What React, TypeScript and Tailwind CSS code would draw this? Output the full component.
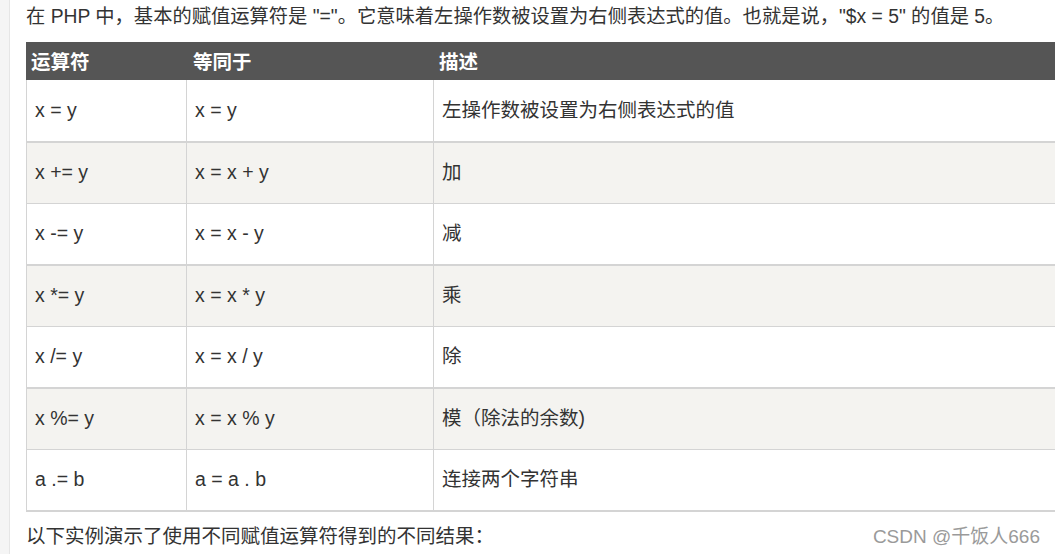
import React from "react";

const rows: [string, string, string][] = [
  ["x = y", "x = y", "左操作数被设置为右侧表达式的值"],
  ["x += y", "x = x + y", "加"],
  ["x -= y", "x = x - y", "减"],
  ["x *= y", "x = x * y", "乘"],
  ["x /= y", "x = x / y", "除"],
  ["x %= y", "x = x % y", "模（除法的余数)"],
  ["a .= b", "a = a . b", "连接两个字符串"],
];

export default function App() {
  return (
    <div
      className="flex w-[1055px] h-[554px] overflow-hidden bg-white text-[#333]"
      style={{ fontFamily: '"Liberation Sans", "Noto Sans CJK SC", sans-serif' }}
    >
      <div className="w-[10px] shrink-0 bg-[#f5f5f5] border-r border-[#e6e6e6]" />
      <div className="flex flex-col pl-[16px] min-w-0 flex-1">
        <p className="h-[42px] flex items-center text-[19.3px] whitespace-nowrap pb-[8px]">
          在 PHP 中，基本的赋值运算符是 "="。它意味着左操作数被设置为右侧表达式的值。也就是说，"$x = 5" 的值是 5。
        </p>
        <div className="w-[1040px] flex flex-col">
          <div className="h-[38px] bg-[#555] text-white font-bold text-[19.5px] flex">
            <div className="w-[161px] pl-[5px] pt-[6px]">运算符</div>
            <div className="w-[247px] pl-[6px] pt-[6px]">等同于</div>
            <div className="flex-1 pl-[5px] pt-[6px]">描述</div>
          </div>
          {rows.map((r, i) => {
            const shaded = i % 2 === 1;
            return (
              <div
                key={i}
                className={
                  shaded
                    ? "h-[62px] flex bg-[#f4f3f0] border-t-2 border-[#d4d4d4] text-[19.5px]"
                    : i === 0
                    ? "h-[61px] flex bg-white text-[19.5px]"
                    : "h-[61px] flex bg-white border-t border-[#d4d4d4] text-[19.5px]"
                }
              >
                <div className="w-[161px] border-l border-r border-[#d4d4d4] flex items-center pl-[8px]">
                  {r[0]}
                </div>
                <div className="w-[247px] border-r border-[#d4d4d4] flex items-center pl-[8px]">
                  {r[1]}
                </div>
                <div className="flex-1 flex items-center pl-[8px]">{r[2]}</div>
              </div>
            );
          })}
          <div className="h-[2px] bg-[#d4d4d4]" />
        </div>
        <div className="flex items-center justify-between h-[42px] pt-[8px] pr-[15px] whitespace-nowrap">
          <span className="text-[19.5px]">以下实例演示了使用不同赋值运算符得到的不同结果：</span>
          <span className="text-[19px] text-[#9a9a9a]">CSDN @千饭人666</span>
        </div>
      </div>
    </div>
  );
}
